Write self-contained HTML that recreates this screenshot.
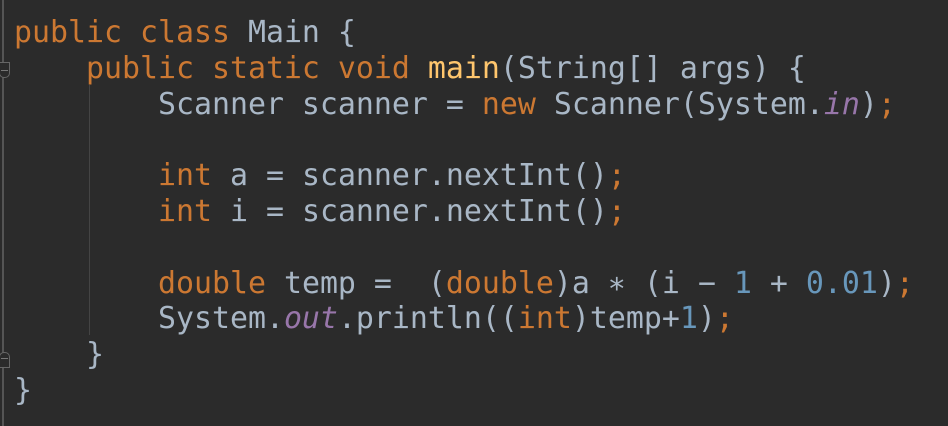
<!DOCTYPE html>
<html><head><style>
html,body{margin:0;padding:0;}
body{width:948px;height:426px;background:#2b2b2b;overflow:hidden;position:relative;}
pre{position:absolute;left:14px;top:15px;margin:0;font-family:"DejaVu Sans Mono",monospace;font-size:29.9px;line-height:35.8px;color:#a9b7c6;letter-spacing:0;}
.k{color:#cc7832}.f{color:#ffc66d}.n{color:#6897bb}.s{color:#9876aa;font-style:italic}
.g{position:absolute;left:2px;top:0;width:2px;height:426px;background:#555;}
.ig{position:absolute;left:89px;top:85px;width:1px;height:250px;background:#444;}
.fold{position:absolute;left:-1px;width:11px;height:16px;background:#2b2b2b;border:1px solid #666;box-sizing:border-box;}
.fl{position:absolute;left:1px;width:7px;height:1px;background:#777;}
</style></head><body>
<div class="g"></div>
<div class="ig"></div>
<div class="fold" style="top:62px;border-radius:0 0 5px 5px"></div><div class="fl" style="top:70px"></div>
<div class="fold" style="top:352px;border-radius:5px 5px 0 0"></div><div class="fl" style="top:358px"></div>
<pre><span class="k">public class</span> Main {
    <span class="k">public static void</span> <span class="f">main</span>(String[] args) {
        Scanner scanner = <span class="k">new</span> Scanner(System.<span class="s">in</span>)<span class="k">;</span>

        <span class="k">int</span> a = scanner.nextInt()<span class="k">;</span>
        <span class="k">int</span> i = scanner.nextInt()<span class="k">;</span>

        <span class="k">double</span> temp =  (<span class="k">double</span>)a ∗ (i − <span class="n">1</span> + <span class="n">0.01</span>)<span class="k">;</span>
        System.<span class="s">out</span>.println((<span class="k">int</span>)temp+<span class="n">1</span>)<span class="k">;</span>
    }
}</pre>
</body></html>
